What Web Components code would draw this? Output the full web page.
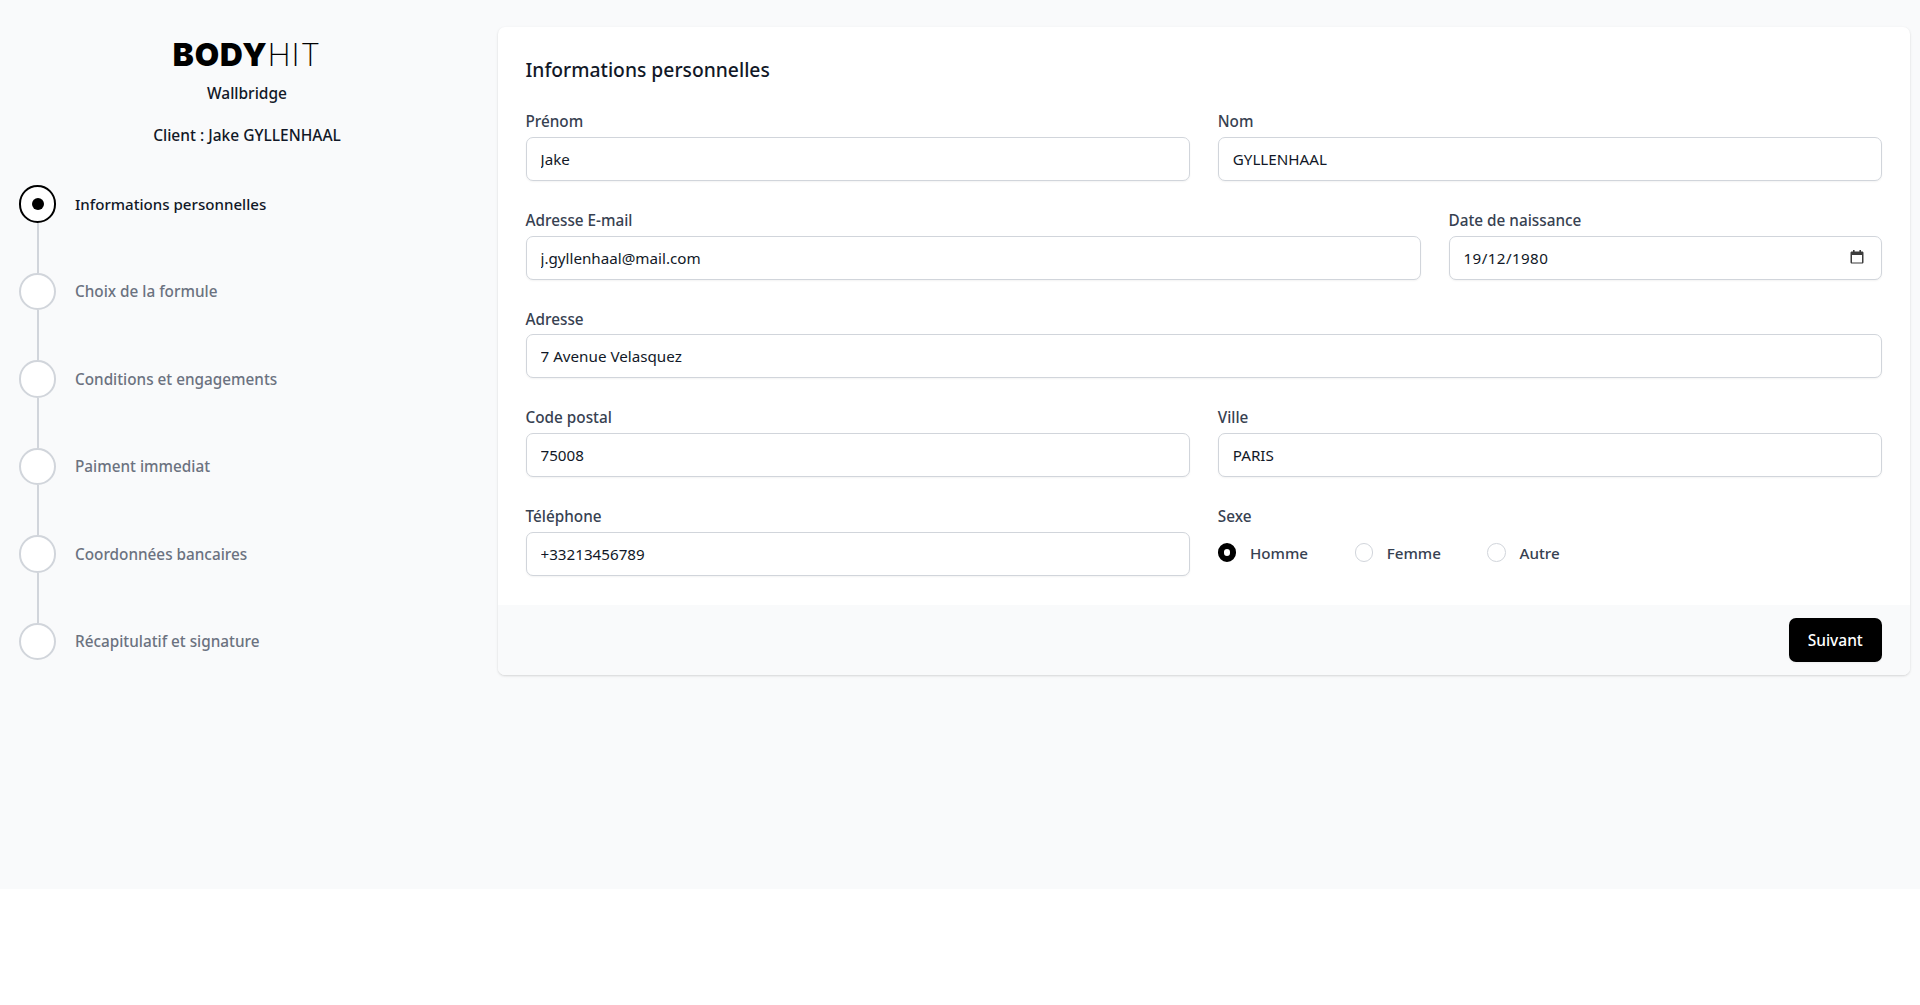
<!doctype html>
<html lang="fr">
<head>
<meta charset="utf-8">
<title>BodyHit</title>
<style>
  body {
    margin: 0;
    background: #fff;
    font-family: "Noto Sans", "Liberation Sans", sans-serif;
    font-size: 15.5px;
    color: #111827;
  }
</style>
</head>
<body>
<bh-page>
  <bh-sidebar slot="side" club="Wallbridge" client="Client : Jake GYLLENHAAL">
    <bh-step state="current">Informations personnelles</bh-step>
    <bh-step>Choix de la formule</bh-step>
    <bh-step>Conditions et engagements</bh-step>
    <bh-step>Paiment immediat</bh-step>
    <bh-step>Coordonnées bancaires</bh-step>
    <bh-step last>Récapitulatif et signature</bh-step>
  </bh-sidebar>
  <bh-card heading="Informations personnelles">
    <bh-field span="3" label="Prénom" value="Jake"></bh-field>
    <bh-field span="3" label="Nom" value="GYLLENHAAL"></bh-field>
    <bh-field span="4" label="Adresse E-mail" value="j.gyllenhaal@mail.com"></bh-field>
    <bh-field span="2" label="Date de naissance" value="19/12/1980" calendar></bh-field>
    <bh-field span="6" label="Adresse" value="7 Avenue Velasquez"></bh-field>
    <bh-field span="3" label="Code postal" value="75008"></bh-field>
    <bh-field span="3" label="Ville" value="PARIS"></bh-field>
    <bh-field span="3" label="Téléphone" value="+33213456789"></bh-field>
    <bh-radios span="3" label="Sexe">
      <bh-radio checked>Homme</bh-radio>
      <bh-radio>Femme</bh-radio>
      <bh-radio>Autre</bh-radio>
    </bh-radios>
    <bh-button slot="footer">Suivant</bh-button>
  </bh-card>
</bh-page>

<script>
/* eslint-env browser */
const shadow = (el, html) => {
  el.attachShadow({mode: 'open'}).innerHTML = html;
};

customElements.define('bh-page', class extends HTMLElement {
  connectedCallback() {
    shadow(this, `
      <style>
        :host {
          display: flex;
          align-items: flex-start;
          height: 889px;
          background: #f9fafb;
          padding: 27px 10px 0 0;
          box-sizing: border-box;
        }
        .side { flex: 0 0 498px; }
        .main { flex: 1; min-width: 0; }
      </style>
      <div class="side"><slot name="side"></slot></div>
      <div class="main"><slot></slot></div>`);
  }
});

customElements.define('bh-sidebar', class extends HTMLElement {
  connectedCallback() {
    shadow(this, `
      <style>
        :host { display: block; width: 494px; font-weight: 500; color: #111827; }
        header {
          display: flex;
          flex-direction: column;
          align-items: center;
        }
        .logo {
          font-family: Inter, sans-serif;
          font-size: 31.5px;
          line-height: 36px;
          margin-top: 9.5px;
          color: #000;
          letter-spacing: .9px;
        }
        .logo b { font-weight: 900; }
        .logo span { font-weight: 200; }
        .club { margin-top: 9.5px; line-height: 23px; }
        .client { margin-top: 19px; line-height: 23px; }
        ol {
          list-style: none;
          margin: 38.2px 0 0 19px;
          padding: 0;
        }
      </style>
      <header>
        <div class="logo"><b>BODY</b><span>HIT</span></div>
        <div class="club">${this.getAttribute('club')}</div>
        <div class="client">${this.getAttribute('client')}</div>
      </header>
      <ol><slot></slot></ol>`);
  }
});

customElements.define('bh-step', class extends HTMLElement {
  connectedCallback() {
    const current = this.getAttribute('state') === 'current';
    shadow(this, `
      <style>
        :host {
          display: grid;
          grid-template-columns: 37.33px 1fr;
          column-gap: 18.67px;
          height: ${this.hasAttribute('last') ? '37.33px' : '87.5px'};
          font-size: ${current ? '15.1px' : '15.3px'};
          font-weight: 500;
          color: ${current ? '#111827' : '#6b7280'};
        }
        .track {
          display: flex;
          flex-direction: column;
          align-items: center;
        }
        .dot {
          flex: none;
          box-sizing: border-box;
          width: 37.33px;
          height: 37.33px;
          border-radius: 50%;
          border: 2.33px solid ${current ? '#000' : '#d1d5db'};
          background: #fff;
          display: flex;
          align-items: center;
          justify-content: center;
        }
        .dot i {
          display: ${current ? 'block' : 'none'};
          width: 12px;
          height: 12px;
          border-radius: 50%;
          background: #000;
        }
        .line {
          flex: 1;
          width: 2.33px;
          background: #d1d5db;
        }
        .text { height: 37.33px; display: flex; align-items: center; }
      </style>
      <div class="track">
        <div class="dot"><i></i></div>
        ${this.hasAttribute('last') ? '' : '<div class="line"></div>'}
      </div>
      <div class="text"><slot></slot></div>`);
  }
});

customElements.define('bh-card', class extends HTMLElement {
  connectedCallback() {
    shadow(this, `
      <style>
        :host {
          display: block;
          background: #fff;
          border-radius: 7px;
          box-shadow: 0 1px 3px rgba(0, 0, 0, .1), 0 1px 2px rgba(0, 0, 0, .06);
          overflow: hidden;
        }
        .body { padding: 28px 28px 29px 27.5px; }
        h2 {
          margin: 0 0 25.4px;
          font-size: 19.3px;
          font-weight: 500;
          line-height: 30px;
          color: #111827;
        }
        .grid {
          display: grid;
          grid-template-columns: repeat(6, 1fr);
          column-gap: 28px;
          row-gap: 28px;
        }
        footer {
          display: flex;
          justify-content: flex-end;
          padding: 13px 28px 13px;
          background: #f9fafb;
        }
      </style>
      <div class="body">
        <h2>${this.getAttribute('heading')}</h2>
        <div class="grid"><slot></slot></div>
      </div>
      <footer><slot name="footer"></slot></footer>`);
  }
});

customElements.define('bh-field', class extends HTMLElement {
  connectedCallback() {
    this.style.gridColumn = `span ${this.getAttribute('span')}`;
    const calendar = this.hasAttribute('calendar');
    const icon = calendar ? `
      <svg viewBox="0 0 14 14" width="14" height="14" aria-hidden="true">
        <path fill="#3c3c3c" d="M3 0h1.6v1.5h4.8V0H11v1.5h1.2c.7 0 1.3.6 1.3 1.3v9.4c0 .7-.6 1.3-1.3 1.3H1.8c-.7 0-1.3-.6-1.3-1.3V2.8c0-.7.6-1.3 1.3-1.3H3zM2 5v7.5h10V5z"/>
      </svg>` : '';
    shadow(this, `
      <style>
        :host { display: block; min-width: 0; }
        label {
          display: block;
          height: 23.33px;
          line-height: 23.33px;
          margin-bottom: 3.37px;
          font-size: 15.3px;
          font-weight: 500;
          color: #374151;
        }
        .box { position: relative; }
        input {
          display: block;
          box-sizing: border-box;
          width: 100%;
          height: 44px;
          padding: 0 14px;
          border: 1px solid #d1d5db;
          border-radius: 7px;
          box-shadow: 0 1px 2px rgba(0, 0, 0, .05);
          background: #fff;
          font: inherit;
          font-size: 15.2px;
          letter-spacing: ${calendar ? '.4px' : '0'};
          color: #111827;
          outline: none;
        }
        svg { position: absolute; top: 14px; right: 18px; }
      </style>
      <label for="f">${this.getAttribute('label')}</label>
      <div class="box">
        <input id="f" type="text" value="${this.getAttribute('value')}">
        ${icon}
      </div>`);
  }
});

customElements.define('bh-radios', class extends HTMLElement {
  connectedCallback() {
    this.style.gridColumn = `span ${this.getAttribute('span')}`;
    shadow(this, `
      <style>
        :host { display: block; }
        .label {
          height: 23.33px;
          line-height: 23.33px;
          margin-bottom: 3.37px;
          font-size: 15.3px;
          font-weight: 500;
          color: #374151;
        }
        .row {
          display: flex;
          align-items: center;
          column-gap: 46.5px;
          height: 41.5px;
        }
      </style>
      <div class="label">${this.getAttribute('label')}</div>
      <div class="row"><slot></slot></div>`);
  }
});

customElements.define('bh-radio', class extends HTMLElement {
  connectedCallback() {
    const checked = this.hasAttribute('checked');
    shadow(this, `
      <style>
        :host {
          display: flex;
          align-items: center;
          column-gap: 13.5px;
          font-size: 15.2px;
          font-weight: 500;
          color: #374151;
        }
        i {
          box-sizing: border-box;
          width: 18.67px;
          height: 18.67px;
          border-radius: 50%;
          background: #fff;
          border: ${checked ? '6.3px solid #000' : '1px solid #d1d5db'};
        }
      </style>
      <i></i><slot></slot>`);
  }
});

customElements.define('bh-button', class extends HTMLElement {
  connectedCallback() {
    shadow(this, `
      <style>
        :host { display: block; }
        button {
          display: block;
          box-sizing: border-box;
          width: 93.5px;
          height: 44.5px;
          border: 1px solid transparent;
          border-radius: 7px;
          background: #000;
          color: #fff;
          font: inherit;
          font-weight: 500;
          padding: 0;
          box-shadow: 0 1px 2px rgba(0, 0, 0, .05);
        }
      </style>
      <button type="button"><slot></slot></button>`);
  }
});
</script>
</body>
</html>
